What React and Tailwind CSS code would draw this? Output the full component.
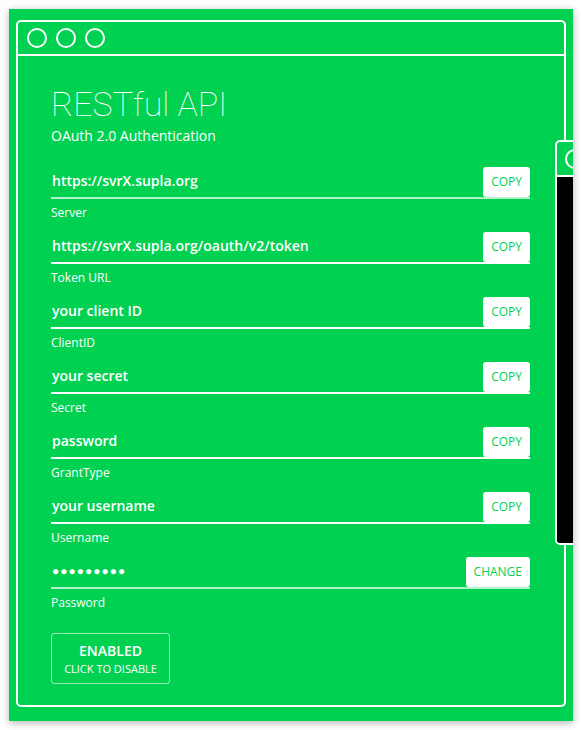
import React from 'react';

// Credentials shown in the OAuth panel
const FIELDS = [
  { value: 'https://svrX.supla.org', label: 'Server', action: 'COPY', faint: true },
  { value: 'https://svrX.supla.org/oauth/v2/token', label: 'Token URL', action: 'COPY' },
  { value: 'your client ID', label: 'ClientID', action: 'COPY' },
  { value: 'your secret', label: 'Secret', action: 'COPY' },
  { value: 'password', label: 'GrantType', action: 'COPY' },
  { value: 'your username', label: 'Username', action: 'COPY' },
  { value: '●●●●●●●●●', label: 'Password', action: 'CHANGE', faint: true, secret: true },
];

function Dots() {
  return (
    <div className="flex items-center gap-[9px]">
      <span className="w-[20px] h-[20px] rounded-full border-2 border-white"></span>
      <span className="w-[20px] h-[20px] rounded-full border-2 border-white"></span>
      <span className="w-[20px] h-[20px] rounded-full border-2 border-white"></span>
    </div>
  );
}

function Field({ field }) {
  return (
    <div className="mb-[11px]">
      <div className={`flex items-end justify-between border-b-2 ${field.faint ? 'border-white/70' : 'border-white'}`}>
        <div
          className={`pl-[1px] pb-[6px] text-white font-semibold ${field.secret ? 'text-[12px] tracking-[1px]' : 'text-[14px]'} leading-[20px]`}
        >
          {field.value}
        </div>
        <button className="h-[30px] px-[8px] bg-white rounded-[3px] text-[12px] text-[#00d151] leading-none">
          {field.action}
        </button>
      </div>
      <div className="mt-[6px] text-[12px] leading-[16px] text-white">{field.label}</div>
    </div>
  );
}

export default function App() {
  return (
    <div className="min-h-screen bg-white pt-[9px] pl-[9px]" style={{ fontFamily: '"Open Sans", "Liberation Sans", sans-serif' }}>
      <div className="relative w-[564px] h-[712px] bg-[#00d151] overflow-hidden shadow-[0_2px_8px_rgba(0,0,0,0.3)] pt-[11px] pl-[7px]">
        {/* main window */}
        <div className="w-[550px] h-[687px] border-2 border-white rounded-[5px]">
          <div className="h-[34px] border-b-2 border-white flex items-center pl-[9px]">
            <Dots />
          </div>
          <div className="pl-[33px] pr-[34px] pt-[28px]">
            <h1 className="text-[34px] leading-[40px] font-thin text-white" style={{ fontFamily: 'Roboto, sans-serif' }}>
              RESTful API
            </h1>
            <p className="mt-[2px] text-[14px] leading-[20px] text-white">OAuth 2.0 Authentication</p>
            <div className="mt-[21px]">
              {FIELDS.map((f) => (
                <Field key={f.label} field={f} />
              ))}
            </div>
            <button className="mt-[22px] w-[119px] h-[51px] border border-white/60 rounded-[3px] text-white flex flex-col items-center justify-center">
              <span className="text-[14px] leading-[18px] font-semibold">ENABLED</span>
              <span className="text-[11px] leading-[15px] mt-[1px]">CLICK TO DISABLE</span>
            </button>
          </div>
        </div>

        {/* second window peeking in from the right */}
        <div className="absolute left-[546px] top-[131px] w-[300px] h-[405px] border-2 border-white rounded-[5px] bg-[#00d151] overflow-hidden flex flex-col">
          <div className="h-[35px] border-b-2 border-white flex items-center pl-[8px] shrink-0">
            <span className="w-[20px] h-[20px] rounded-full border-2 border-white"></span>
          </div>
          <div className="flex-1 bg-black"></div>
        </div>
      </div>
    </div>
  );
}
